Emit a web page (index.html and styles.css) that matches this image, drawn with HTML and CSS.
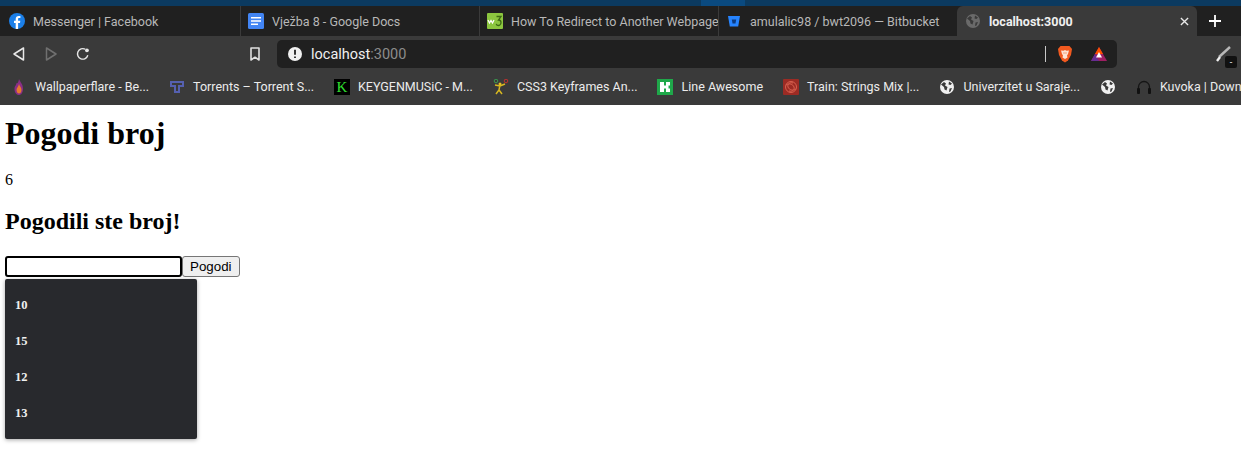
FILE: index.html
```html
<!DOCTYPE html>
<html lang="bs">
<head>
    <meta charset="UTF-8">
    <meta name="viewport" content="width=device-width, initial-scale=1.0">
    <title>localhost:3000</title>
    <link rel="stylesheet" href="styles.css">
</head>
<body>

    <svg class="defs" width="0" height="0">
        <symbol id="globe" viewBox="0 0 16 16">
            <circle cx="8" cy="8" r="7" fill="currentColor"/>
            <path d="M2 5.500 5 3l2 1.500-1 2 2.500 1.500-1 3.500-2-1-.5-2.500zM10 2.500l3 2-1.500 1.500-2-.5zM10.500 9.500l2.500-.5-1.500 3.500-1.500.5z" fill="#3a3a3a"/>
        </symbol>
    </svg>

    <div class="top-strip"><span class="top-strip-light"></span></div>

    <div class="tabs">
        <div class="tab">
            <svg class="icon" viewBox="0 0 16 16"><circle cx="8" cy="8" r="8" fill="#1b7fe8"/><path d="M6.700 16V10H5V7.700h1.700V6c0-2 1.200-3.100 3-3.100.8 0 1.500.1 1.700.1v2h-1.200c-.9 0-1.100.5-1.100 1.100v1.600h2.200L11 10H9.100v6z" fill="#fff"/></svg>
            <span class="tab-title">Messenger | Facebook</span>
        </div>
        <div class="tab">
            <svg class="icon" viewBox="0 0 16 16"><rect width="16" height="16" rx="1.500" fill="#4285f4"/><path d="M3 4h10v1.600H3zM3 7.200h10v1.600H3zM3 10.400h7V12H3z" fill="#fff"/></svg>
            <span class="tab-title">Vježba 8 - Google Docs</span>
        </div>
        <div class="tab">
            <svg class="icon" viewBox="0 0 16 16"><rect width="16" height="16" rx="1" fill="#8cc63f"/><path d="M1 7l1.500 3L4 7.500 5.500 10 7 7" fill="none" stroke="#fff" stroke-width="1.200"/><path d="M9.500 3.500H14L11.500 7c2 0 2.500 1.200 2.500 2.500s-1 3-2.300 3-2.200-.6-2.500-1.700" fill="none" stroke="#3d6b12" stroke-width="1.300"/></svg>
            <span class="tab-title">How To Redirect to Another Webpage</span>
        </div>
        <div class="tab">
            <svg class="icon" viewBox="0 0 16 16"><path d="M2 3h12l-1.800 10.500H3.800z" fill="#2684ff"/><path d="M5.800 6.500h4.400l-.7 4H6.500z" fill="#0b3a80"/></svg>
            <span class="tab-title">amulalic98 / bwt2096 — Bitbucket</span>
        </div>
        <div class="tab tab-active">
            <svg class="icon icon-dim"><use href="#globe"/></svg>
            <span class="tab-title">localhost:3000</span>
            <svg class="tab-close" viewBox="0 0 10 10"><path d="M1 1l8 8M9 1l-8 8" stroke="#e8e8e8" stroke-width="1.500"/></svg>
        </div>
        <svg class="new-tab" viewBox="0 0 12 12"><path d="M6 0v12M0 6h12" stroke="#fff" stroke-width="1.800"/></svg>
    </div>

    <div class="toolbar">
        <div class="nav-buttons">
            <svg class="nav-icon" viewBox="0 0 14 16"><path d="M11.500 2v12L2 8z" fill="none" stroke="#e8e8e8" stroke-width="1.500" stroke-linejoin="round"/></svg>
            <svg class="nav-icon" viewBox="0 0 14 16"><path d="M2.500 2v12L12 8z" fill="none" stroke="#707070" stroke-width="1.500" stroke-linejoin="round"/></svg>
            <svg class="nav-icon" viewBox="0 0 16 16"><path d="M13.500 9.500A6 6 0 1 1 10.500 2.500" fill="none" stroke="#e8e8e8" stroke-width="1.600"/><circle cx="12.500" cy="3.800" r="2.200" fill="#e8e8e8"/></svg>
        </div>
        <svg class="bookmark-icon" viewBox="0 0 12 16"><path d="M2 2h8v12l-4-2.800L2 14z" fill="none" stroke="#e0e0e0" stroke-width="1.600" stroke-linejoin="round"/></svg>
        <div class="url-bar">
            <svg class="icon" viewBox="0 0 16 16"><circle cx="8" cy="8" r="7" fill="#f0f0f0"/><path d="M8 3.800v5M8 10.400v1.700" stroke="#202020" stroke-width="1.800"/></svg>
            <span class="url-text">localhost<span class="url-port">:3000</span></span>
            <span class="url-sep"></span>
            <svg class="brave-icon" viewBox="0 0 16 18"><path d="M3.500 1h9l2.500 3-1 6-3 5.500-3 2-3-2L2 10 1 4z" fill="#f1591f"/><path d="M4 5.500l2.500.3L8 5l1.500.8 2.500-.3-1 3.500-1 1.500.5 2L8 14l-2.500-1.500.5-2L5 9z" fill="#fbe3d4"/><path d="M6.500 8h1M8.500 8h1" stroke="#f1591f"/></svg>
            <svg class="bat-icon" viewBox="0 0 18 16"><path d="M9 1l8 14H1z" fill="#9e1f63"/><path d="M9 1l4 7H5z" fill="#ff5000"/><path d="M1 15l4-7 4 7z" fill="#662d91"/><path d="M9 6l3 5.500H6z" fill="#fff"/></svg>
        </div>
        <div class="pen">
            <svg class="pen-icon" viewBox="0 0 16 16"><path d="M15 1L4 11" stroke="#b8b8b8" stroke-width="2.400"/><path d="M5 11l-3 4" stroke="#f0f0f0" stroke-width="2.400"/></svg>
            <span class="pen-badge">-</span>
        </div>
    </div>

    <div class="bookmarks">
        <div class="bookmark">
            <svg class="icon" viewBox="0 0 16 16"><path d="M8 0c1 3 4 5 4 9.500S10 16 8 16s-4.500-2-4.500-6C3.500 7 5 7 5.500 4 6.500 5 7.500 3 8 0z" fill="#8a2f86"/><path d="M8 5c.5 2 2.500 3.500 2.500 6S9 14.500 8 14.500 5.500 13.500 5.500 11 7.500 8 8 5z" fill="#e8792e"/></svg>
            <span>Wallpaperflare - Be...</span>
        </div>
        <div class="bookmark">
            <svg class="icon" viewBox="0 0 16 16"><path d="M1 2h14v6h-4v6H5V8H1zM3 4v2h4v6h2V6h4V4z" fill="#5560b0"/></svg>
            <span>Torrents – Torrent S...</span>
        </div>
        <div class="bookmark">
            <span class="k-icon">K</span>
            <span>KEYGENMUSiC - M...</span>
        </div>
        <div class="bookmark">
            <svg class="icon" viewBox="0 0 16 16"><circle cx="7" cy="5" r="1.500" fill="#e8c020"/><path d="M7 6L6 11l-3 4M6 11l3 4M2 6l5 1 5-2" fill="none" stroke="#d8b820" stroke-width="1.500"/><circle cx="3" cy="2" r="1.800" fill="none" stroke="#3a9a50"/><circle cx="13" cy="2" r="1.800" fill="none" stroke="#c03030"/></svg>
            <span>CSS3 Keyframes An...</span>
        </div>
        <div class="bookmark">
            <svg class="icon" viewBox="0 0 16 16"><rect width="16" height="16" fill="#1fa84a"/><path d="M3 3h4v3.500h2V3h4v3.500h-1.500v3H13V13H9V9.500H7V13H3z" fill="#fff"/></svg>
            <span>Line Awesome</span>
        </div>
        <div class="bookmark">
            <svg class="icon" viewBox="0 0 16 16"><rect width="16" height="16" rx="1" fill="#9c2b24"/><circle cx="8" cy="8" r="5.500" fill="none" stroke="#d8604f"/><path d="M3 6c3-2 7-1 8 2s-2 5-5 4M13 10C10 12 6 11 5 8s2-5 5-4" fill="none" stroke="#d8604f"/></svg>
            <span>Train: Strings Mix |...</span>
        </div>
        <div class="bookmark">
            <svg class="icon icon-light"><use href="#globe"/></svg>
            <span>Univerzitet u Saraje...</span>
        </div>
        <div class="bookmark">
            <svg class="icon icon-light"><use href="#globe"/></svg>
        </div>
        <div class="bookmark">
            <svg class="icon" viewBox="0 0 16 16"><path d="M2.500 10V8a5.500 5.500 0 0 1 11 0v2" fill="none" stroke="#151515" stroke-width="1.300"/><rect x="1" y="9" width="3" height="6" rx="1" fill="#111"/><rect x="12" y="9" width="3" height="6" rx="1" fill="#111"/></svg>
            <span>Kuvoka | Download...</span>
        </div>
        <div class="bookmark">
            <svg class="icon icon-light"><use href="#globe"/></svg>
        </div>
    </div>

    <div class="page">
        <h1>Pogodi broj</h1>
        <p>6</p>
        <h2>Pogodili ste broj!</h2>
        <div class="guess-form">
            <input type="text" class="guess-input">
            <button type="button" class="guess-button">Pogodi</button>
            <ul class="suggestions">
                <li>10</li>
                <li>15</li>
                <li>12</li>
                <li>13</li>
            </ul>
        </div>
    </div>

</body>
</html>
```

FILE: styles.css
```css
html, body {
    height: 100%;
    overflow: hidden;
}

body {
    margin: 0;
    background-color: white;
    font-family: Roboto, sans-serif;
}

.defs {
    display: block;
    height: 0;
}

.icon {
    flex: none;
    width: 16px;
    height: 16px;
}

.icon-dim {
    color: #6a6a6a;
}

.icon-light {
    color: #f0f0f0;
}

/* Franja superior */
.top-strip {
    height: 6px;
    background-color: #0b3a60;
    padding-left: 701px;
}

.top-strip-light {
    display: block;
    width: 44px;
    height: 6px;
    background-color: #0a4a80;
}

/* Pestanas */
.tabs {
    display: flex;
    align-items: stretch;
    height: 30px;
    background-color: #202020;
}

.tab {
    flex: 0 0 239px;
    box-sizing: border-box;
    display: flex;
    align-items: center;
    gap: 8px;
    padding-left: 7px;
    border-right: 1px solid #3a3a3a;
    font-size: 12.5px;
    color: #b8b8b8;
    white-space: nowrap;
    overflow: hidden;
}

.tab:first-child {
    flex-basis: 241px;
    padding-left: 9px;
}

.tab:nth-child(4) {
    flex-basis: 238px;
    border-right: none;
}

.tab-active {
    flex-basis: 240px;
    padding-left: 8px;
    padding-right: 8px;
    border-right: none;
    border-radius: 6px 6px 0 0;
    background-color: #3a3a3a;
    color: #f0f0f0;
    font-weight: bold;
}

.tab-title {
    flex: 1;
}

.tab-close {
    flex: none;
    width: 9px;
    height: 9px;
}

.new-tab {
    width: 12px;
    height: 12px;
    margin: 9px 0 0 12px;
}

/* Barra de navegacion */
.toolbar {
    display: flex;
    align-items: center;
    height: 36px;
    background-color: #3a3a3a;
}

.nav-buttons {
    display: flex;
    align-items: center;
    gap: 18px;
    padding-left: 12px;
}

.nav-icon {
    width: 14px;
    height: 16px;
}

.bookmark-icon {
    width: 12px;
    height: 16px;
    margin-left: 159px;
}

.url-bar {
    display: flex;
    align-items: center;
    gap: 8px;
    width: 840px;
    height: 28px;
    box-sizing: border-box;
    margin-left: 16px;
    padding: 0 9px 0 10px;
    border-radius: 5px;
    background-color: #202020;
}

.url-text {
    flex: 1;
    font-size: 14.5px;
    color: #f0f0f0;
}

.url-port {
    color: #8c8c8c;
}

.url-sep {
    width: 1px;
    height: 16px;
    background-color: #c8c8c8;
}

.brave-icon {
    width: 16px;
    height: 18px;
    margin-left: 3px;
}

.bat-icon {
    width: 18px;
    height: 16px;
    margin-left: 9px;
}

.pen {
    position: relative;
    width: 16px;
    height: 16px;
    margin-left: 98px;
}

.pen-icon {
    width: 16px;
    height: 16px;
}

.pen-badge {
    position: absolute;
    left: 10px;
    top: 10px;
    width: 12px;
    height: 12px;
    border-radius: 2px;
    background-color: #111;
    color: white;
    font-size: 9px;
    line-height: 12px;
    text-align: center;
}

/* Marcadores */
.bookmarks {
    display: flex;
    align-items: center;
    gap: 20px;
    height: 33px;
    box-sizing: border-box;
    padding: 0 0 4px 11px;
    background-color: #3a3a3a;
    font-size: 12.5px;
    color: #ececec;
    white-space: nowrap;
    overflow: hidden;
}

.bookmark {
    display: flex;
    align-items: center;
    gap: 8px;
}

.k-icon {
    flex: none;
    width: 16px;
    height: 16px;
    background-color: black;
    color: #30e030;
    font-family: "Liberation Serif", serif;
    font-size: 15px;
    line-height: 16px;
    text-align: center;
}

/* Contenido de la pagina */
.page {
    padding: 0 5px;
    color: black;
    font-family: "Liberation Serif", serif;
    font-size: 16px;
}

.page h1 {
    margin: 10px 0 0;
    font-size: 32px;
}

.page p {
    margin: 19px 0 0;
}

.page h2 {
    margin: 19px 0 0;
    font-size: 24px;
}

.guess-form {
    position: relative;
    display: flex;
    margin-top: 21px;
}

.guess-input {
    box-sizing: border-box;
    width: 177px;
    height: 21px;
    border: 2px solid black;
    border-radius: 3px;
    outline: none;
}

.guess-button {
    box-sizing: border-box;
    height: 21px;
    padding: 0 7px;
    border: 1px solid #767676;
    border-radius: 3px;
    background-color: #efefef;
    color: black;
    font-family: "Liberation Sans", Arial, sans-serif;
    font-size: 13.33px;
}

/* Lista desplegable sobre el contenido */
.suggestions {
    position: absolute;
    left: 0;
    top: 23px;
    width: 192px;
    box-sizing: border-box;
    margin: 0;
    padding: 8px 0;
    list-style: none;
    border-radius: 2px;
    background-color: #28292d;
    box-shadow: 0 1px 4px rgba(0, 0, 0, 0.35);
    color: #f0f0f0;
    font-size: 12.5px;
    font-weight: bold;
}

.suggestions li {
    height: 36px;
    padding-left: 10px;
    line-height: 36px;
}
```
